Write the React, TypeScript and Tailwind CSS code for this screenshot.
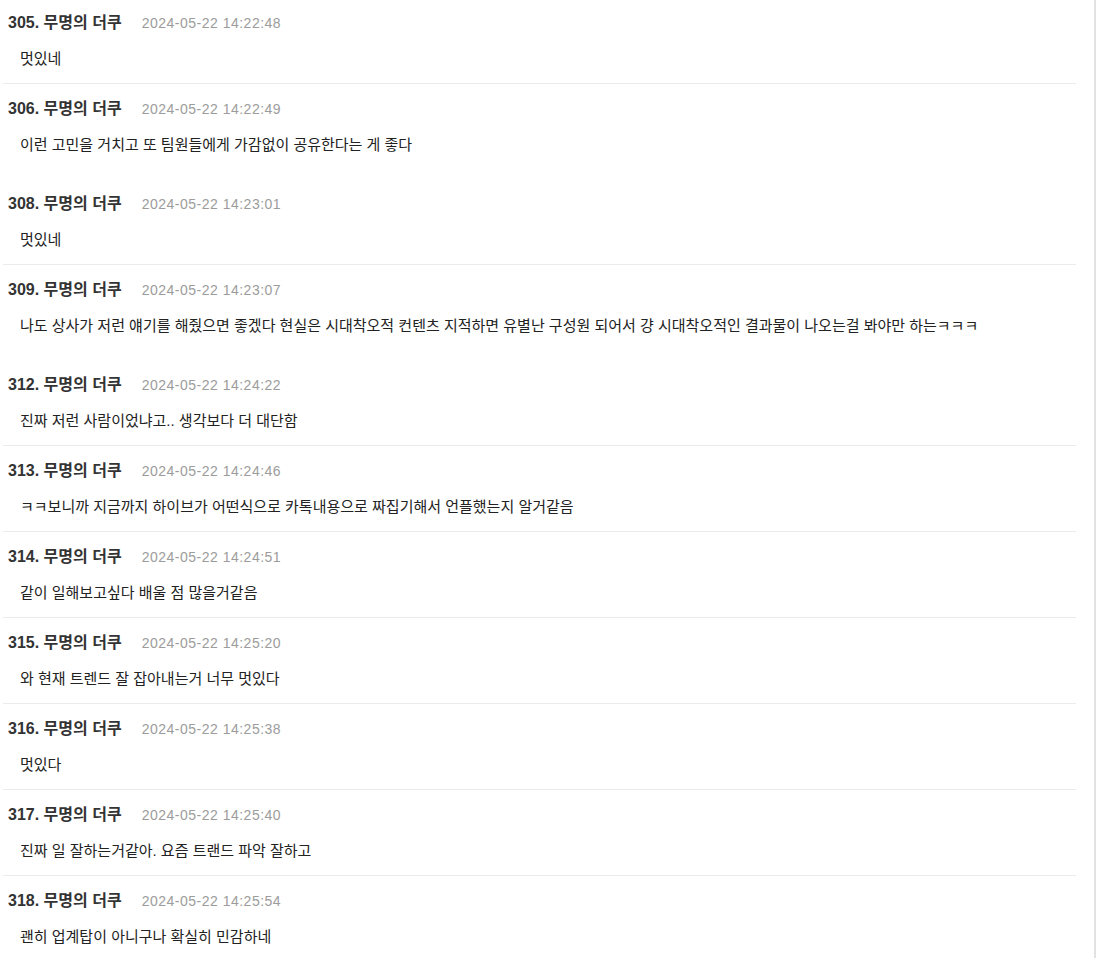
import React from 'react';

type Comment = {
  no: number;
  date: string;
  text: string;
  divider: boolean;
};

const comments: Comment[] = [
  { no: 305, date: '2024-05-22 14:22:48', text: '멋있네', divider: true },
  { no: 306, date: '2024-05-22 14:22:49', text: '이런 고민을 거치고 또 팀원들에게 가감없이 공유한다는 게 좋다', divider: false },
  { no: 308, date: '2024-05-22 14:23:01', text: '멋있네', divider: true },
  {
    no: 309,
    date: '2024-05-22 14:23:07',
    text: '나도 상사가 저런 얘기를 해줬으면 좋겠다 현실은 시대착오적 컨텐츠 지적하면 유별난 구성원 되어서 걍 시대착오적인 결과물이 나오는걸 봐야만 하는ㅋㅋㅋ',
    divider: false,
  },
  { no: 312, date: '2024-05-22 14:24:22', text: '진짜 저런 사람이었냐고.. 생각보다 더 대단함', divider: true },
  { no: 313, date: '2024-05-22 14:24:46', text: 'ㅋㅋ보니까 지금까지 하이브가 어떤식으로 카톡내용으로 짜집기해서 언플했는지 알거같음', divider: true },
  { no: 314, date: '2024-05-22 14:24:51', text: '같이 일해보고싶다 배울 점 많을거같음', divider: true },
  { no: 315, date: '2024-05-22 14:25:20', text: '와 현재 트렌드 잘 잡아내는거 너무 멋있다', divider: true },
  { no: 316, date: '2024-05-22 14:25:38', text: '멋있다', divider: true },
  { no: 317, date: '2024-05-22 14:25:40', text: '진짜 일 잘하는거같아. 요즘 트랜드 파악 잘하고', divider: true },
  { no: 318, date: '2024-05-22 14:25:54', text: '괜히 업계탑이 아니구나 확실히 민감하네', divider: true },
];

const font = { fontFamily: '"Liberation Sans", "Noto Sans CJK KR", sans-serif' };

function CommentItem({ c, first }: { c: Comment; first: boolean }) {
  return (
    <li
      className={`ml-[3px] ${first ? 'pt-[13px]' : 'pt-[15px]'} ${
        c.divider ? 'pb-[14px] border-b border-[#ebebeb]' : 'pb-6'
      }`}
    >
      <div className="flex items-center h-5 pl-[5px]">
        <span className="text-[16px] font-bold text-[#333] leading-5">
          {c.no}. 무명의 더쿠
        </span>
        <span className="ml-[20px] text-[14px] tracking-[0.5px] text-[#9c9c9c] leading-5">{c.date}</span>
      </div>
      <p className="mt-4 h-5 pl-[17px] text-[15px] leading-5 text-[#222] whitespace-nowrap">{c.text}</p>
    </li>
  );
}

export default function App() {
  return (
    <div className="h-screen w-full bg-white flex overflow-hidden" style={font}>
      <ul className="flex-1 min-w-0 flex flex-col">
        {comments.map((c, i) => (
          <CommentItem key={c.no} c={c} first={i === 0} />
        ))}
      </ul>
      <div className="w-[18px] shrink-0" />
      <div className="w-[2px] shrink-0 bg-[#e2e2e2]" />
      <div className="w-[2px] shrink-0" />
    </div>
  );
}
